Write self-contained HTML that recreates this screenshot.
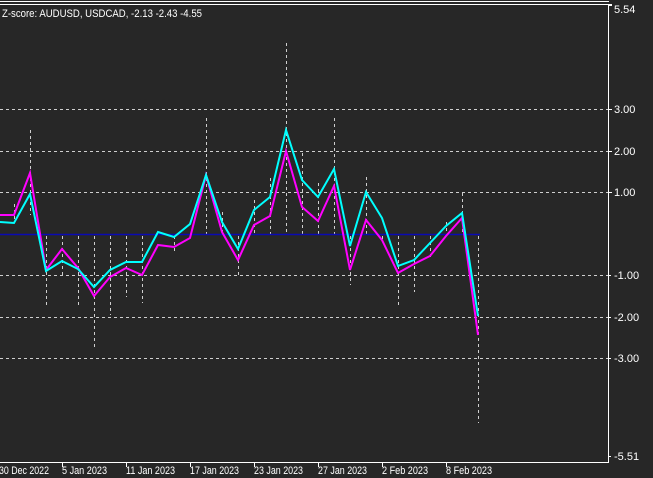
<!DOCTYPE html>
<html><head><meta charset="utf-8"><style>
html,body{margin:0;padding:0;background:#272727;}
svg{display:block}
text{font-family:"Liberation Sans",sans-serif;font-size:11px;fill:#fff}
</style></head><body>
<svg width="653" height="478" viewBox="0 0 653 478" xmlns="http://www.w3.org/2000/svg">
<rect width="653" height="478" fill="#272727"/>
<line x1="0" y1="1.5" x2="609" y2="1.5" stroke="#fff"/>
<line x1="0" y1="4.5" x2="612" y2="4.5" stroke="#fff"/>
<g stroke="#cfcfcf" stroke-dasharray="3,3" stroke-width="1">
<line x1="0" y1="109.5" x2="608" y2="109.5"/>
<line x1="0" y1="151.5" x2="608" y2="151.5"/>
<line x1="0" y1="192.5" x2="608" y2="192.5"/>
<line x1="0" y1="275.5" x2="608" y2="275.5"/>
<line x1="0" y1="317.5" x2="608" y2="317.5"/>
<line x1="0" y1="358.5" x2="608" y2="358.5"/>
<line x1="30.5" y1="130" x2="30.5" y2="215"/>
<line x1="14.5" y1="204" x2="14.5" y2="222"/>
<line x1="46.5" y1="236" x2="46.5" y2="307"/>
<line x1="62.5" y1="236" x2="62.5" y2="275"/>
<line x1="78.5" y1="236" x2="78.5" y2="307"/>
<line x1="94.5" y1="236" x2="94.5" y2="350"/>
<line x1="110.5" y1="236" x2="110.5" y2="315"/>
<line x1="126.5" y1="236" x2="126.5" y2="297"/>
<line x1="142.5" y1="236" x2="142.5" y2="303"/>
<line x1="174.5" y1="236" x2="174.5" y2="252"/>
<line x1="206.5" y1="118" x2="206.5" y2="234"/>
<line x1="222.5" y1="212" x2="222.5" y2="234"/>
<line x1="238.5" y1="236" x2="238.5" y2="277"/>
<line x1="254.5" y1="200" x2="254.5" y2="234"/>
<line x1="270.5" y1="178" x2="270.5" y2="234"/>
<line x1="286.5" y1="43" x2="286.5" y2="234"/>
<line x1="302.5" y1="153" x2="302.5" y2="234"/>
<line x1="318.5" y1="183" x2="318.5" y2="234"/>
<line x1="334.5" y1="118" x2="334.5" y2="234"/>
<line x1="350.5" y1="236" x2="350.5" y2="285"/>
<line x1="366.5" y1="177" x2="366.5" y2="234"/>
<line x1="382.5" y1="236" x2="382.5" y2="240"/>
<line x1="398.5" y1="236" x2="398.5" y2="307"/>
<line x1="414.5" y1="236" x2="414.5" y2="292"/>
<line x1="430.5" y1="236" x2="430.5" y2="260"/>
<line x1="446.5" y1="222" x2="446.5" y2="234"/>
<line x1="462.5" y1="193" x2="462.5" y2="234"/>
<line x1="478.5" y1="236" x2="478.5" y2="423"/>
</g>
<line x1="0" y1="234.5" x2="480" y2="234.5" stroke="#0a0ab4" stroke-width="1.5"/>
<polyline fill="none" stroke="#ff00ff" stroke-width="2" points="0,215 14,215 30,173 46,270 62,249 78,268 94,296 110,277 126,268 142,275 158,245 174,247 190,238 206,175 222,232 238,260 254,225 270,216 286,151 302,207 318,221 334,186 350,270 366,220 382,240 398,273 414,264 430,256 446,236 462,218 478,335"/>
<polyline fill="none" stroke="#00ffff" stroke-width="2" points="0,222 14,223 30,194 46,271 62,261 78,269 94,287 110,270 126,262 142,262 158,232 174,237 190,224 206,175 222,222 238,249 254,210 270,197 286,130 302,180 318,197 334,169 350,246 366,192 382,218 398,266 414,260 430,243 446,226 462,213 478,316"/>
<line x1="608.5" y1="4" x2="608.5" y2="462" stroke="#fff"/>
<line x1="0" y1="462.5" x2="609" y2="462.5" stroke="#fff"/>
<g stroke="#fff">
<line x1="608" y1="5.5" x2="612" y2="5.5"/>
<line x1="608" y1="109.5" x2="612" y2="109.5"/>
<line x1="608" y1="151.5" x2="612" y2="151.5"/>
<line x1="608" y1="192.5" x2="612" y2="192.5"/>
<line x1="608" y1="275.5" x2="611" y2="275.5"/>
<line x1="608" y1="317.5" x2="611" y2="317.5"/>
<line x1="608" y1="358.5" x2="611" y2="358.5"/>
<line x1="608" y1="456.5" x2="611" y2="456.5"/>
<line x1="62.5" y1="462" x2="62.5" y2="467"/>
<line x1="126.5" y1="462" x2="126.5" y2="467"/>
<line x1="190.5" y1="462" x2="190.5" y2="467"/>
<line x1="254.5" y1="462" x2="254.5" y2="467"/>
<line x1="318.5" y1="462" x2="318.5" y2="467"/>
<line x1="382.5" y1="462" x2="382.5" y2="467"/>
<line x1="446.5" y1="462" x2="446.5" y2="467"/>
</g>
<text x="2" y="17" textLength="200" lengthAdjust="spacingAndGlyphs">Z-score: AUDUSD, USDCAD,  -2.13 -2.43 -4.55</text>
<text x="614" y="13">5.54</text>
<text x="614" y="113">3.00</text>
<text x="614" y="155">2.00</text>
<text x="614" y="196">1.00</text>
<text x="614" y="279">-1.00</text>
<text x="614" y="321">-2.00</text>
<text x="614" y="362">-3.00</text>
<text x="614" y="460">-5.51</text>
<text x="-1" y="474" textLength="50" lengthAdjust="spacingAndGlyphs">30 Dec 2022</text>
<text x="62" y="474" textLength="45" lengthAdjust="spacingAndGlyphs">5 Jan 2023</text>
<text x="126" y="474" textLength="49" lengthAdjust="spacingAndGlyphs">11 Jan 2023</text>
<text x="190" y="474" textLength="49" lengthAdjust="spacingAndGlyphs">17 Jan 2023</text>
<text x="254" y="474" textLength="49" lengthAdjust="spacingAndGlyphs">23 Jan 2023</text>
<text x="318" y="474" textLength="49" lengthAdjust="spacingAndGlyphs">27 Jan 2023</text>
<text x="382" y="474" textLength="46" lengthAdjust="spacingAndGlyphs">2 Feb 2023</text>
<text x="446" y="474" textLength="46" lengthAdjust="spacingAndGlyphs">8 Feb 2023</text>
</svg>
</body></html>
